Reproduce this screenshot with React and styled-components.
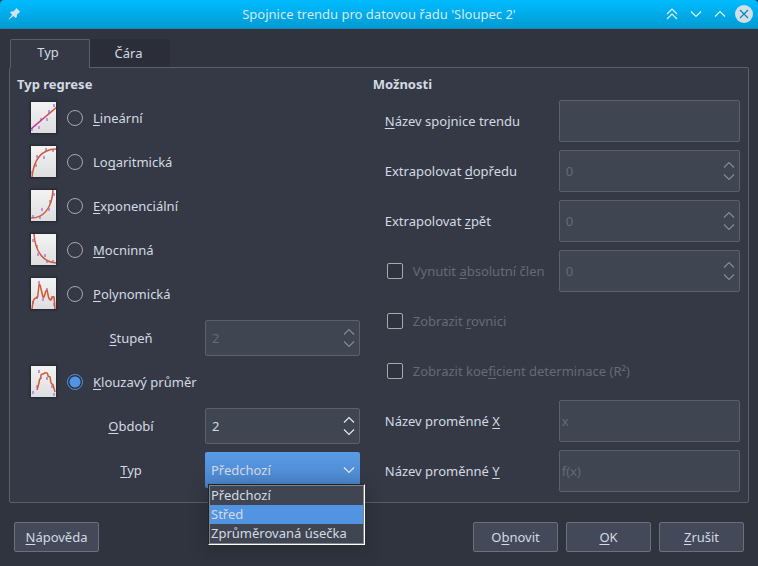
import React, { useState } from "react";
import styled, { createGlobalStyle } from "styled-components";

const GlobalStyle = createGlobalStyle`
  * {
    box-sizing: border-box;
  }

  body {
    margin: 0;
    background: #2f343f;
    color: #d3dae3;
    font-family: "Noto Sans", sans-serif;
    font-size: 13px;
    line-height: 18px;
  }

  button, input, select {
    margin: 0;
    color: inherit;
    font: inherit;
  }
`;

// window frame
const Window = styled.div`
  display: flex;
  flex-direction: column;
  min-height: 100vh;
`;

const TitleBar = styled.header`
  display: grid;
  grid-template-columns: 92px 1fr 92px;
  align-items: center;
  height: 29px;
  padding: 0 4px;
  border-bottom: 1px solid #1787b1;
  border-radius: 4px 4px 0 0;
  background: linear-gradient(#00bcff, #009bd3);
`;

const Title = styled.h1`
  margin: 0;
  color: #d3e9f5;
  font-size: 13px;
  font-weight: 400;
  text-align: center;
  white-space: nowrap;
`;

const WindowButtons = styled.div`
  display: flex;
  justify-content: flex-end;
  gap: 4px;
`;

const WindowButton = styled.button`
  display: flex;
  align-items: center;
  justify-content: center;
  width: 20px;
  height: 20px;
  padding: 0;
  border: 0;
  background: none;
  color: #e0f0f9;
`;

// tabs
const Tabs = styled.div`
  display: flex;
  padding: 10px 10px 0;
`;

const Tab = styled.button`
  position: relative;
  width: 80px;
  height: 28px;
  padding: ${(p) => (p.$active ? "0 4px 3px 0" : "0 3px 1px 0")};
  border: 1px solid ${(p) => (p.$active ? "#5b5f6b" : "#2b2e39")};
  border-bottom: 0;
  border-radius: 2px 2px 0 0;
  background: ${(p) => (p.$active ? "#353945" : "#2b2e39")};

  &::after {
    content: "";
    display: ${(p) => (p.$active ? "block" : "none")};
    position: absolute;
    right: 0;
    bottom: -1px;
    left: 0;
    height: 1px;
    background: #353945;
  }
`;

const Panel = styled.main`
  display: grid;
  grid-template-columns: minmax(0, 14fr) minmax(0, 15fr);
  gap: 13px;
  margin: 0 9px;
  padding: 0 8px 6px 7px;
  border: 1px solid #5b5f6b;
  border-radius: 2px;
  background: #353945;
`;

const Group = styled.section`
  display: flex;
  flex-direction: column;
`;

const GroupTitle = styled.h2`
  height: 28px;
  margin: 0;
  padding-top: 7px;
  font-size: 13px;
  font-weight: 700;
`;

// rows
const RegressionRow = styled.div`
  display: flex;
  align-items: center;
  height: 44px;
  padding-left: 14px;
`;

const SettingRow = styled.div`
  display: grid;
  grid-template-columns: 114px minmax(0, 1fr);
  gap: 17px;
  align-items: center;
  height: 44px;
  padding-left: 57px;

  label {
    text-align: center;
  }
`;

const OptionRow = styled.div`
  display: grid;
  grid-template-columns: ${(p) => (p.$wide ? "1fr" : "174px minmax(0, 1fr)")};
  align-items: center;
  height: 50px;
  padding-left: 12px;
`;

const Thumb = styled.svg`
  width: 25px;
  height: 31px;
  margin: 0 11px 1px 0;
  background: linear-gradient(#f3f3f3, #dedede);
  box-shadow: 0 0 2px 1px #23262e;
`;

const Radio = styled.input`
  appearance: none;
  width: 16px;
  height: 16px;
  margin-right: 10px;
  border: 1px solid #a5a9b1;
  border-radius: 50%;

  &:checked {
    border-color: #5294e2;
    background: radial-gradient(#5294e2 5px, #2c303a 6px);
  }
`;

const CheckLabel = styled.label`
  display: flex;
  align-items: center;
  gap: 10px;
  padding-left: 2px;
  color: #656a75;
  white-space: nowrap;
`;

const Checkbox = styled.input`
  appearance: none;
  width: 16px;
  height: 16px;
  border: 1px solid #a5a9b1;
  border-radius: 2px;
  background: #2f333e;
`;

const Key = styled.u`
  text-decoration-thickness: 1px;
  text-decoration-skip-ink: none;
  text-underline-offset: 2px;
`;

// fields
const TextField = styled.input`
  width: 100%;
  height: 42px;
  padding: 0 2px;
  border: 1px solid #5b606b;
  border-radius: 2px;
  background: #404651;

  &::placeholder {
    color: #656a75;
    opacity: 1;
  }
`;

const SpinBox = styled.div`
  display: flex;
  height: ${(p) => (p.$tall ? 42 : 36)}px;
  border: 1px solid #5b606b;
  border-radius: 2px;
  background: #404651;
  color: ${(p) => (p.$disabled ? "#656a75" : "#d3dae3")};
`;

const SpinInput = styled.input`
  flex: 1;
  min-width: 0;
  padding: 0 6px;
  border: 0;
  background: none;
  appearance: textfield;

  &::-webkit-inner-spin-button {
    display: none;
  }
`;

const SpinButtons = styled.div`
  display: flex;
  flex-direction: column;
  justify-content: center;
  width: 20px;
`;

const SpinButton = styled.button`
  display: flex;
  align-items: center;
  justify-content: center;
  height: 12px;
  padding: 0;
  border: 0;
  background: none;
  color: #e4e9f0;

  &:disabled {
    color: #858a94;
  }
`;

const Combo = styled.div`
  position: relative;
`;

const ComboSelect = styled.select`
  display: block;
  appearance: none;
  width: 100%;
  height: 36px;
  padding: 0 24px 0 6px;
  border: 0;
  border-radius: 2px;
  background: linear-gradient(#5a9ae6, #4a85cb);
`;

const ComboArrow = styled.span`
  position: absolute;
  top: 12px;
  right: 5px;
  display: flex;
  color: #e4e9f0;
  pointer-events: none;
`;

const Menu = styled.div`
  position: absolute;
  z-index: 1;
  top: 32px;
  right: -5px;
  left: 3px;
  border: 1px solid #1f2229;
  border-right-color: #fff;
  border-bottom-color: #fff;
  box-shadow: 0 4px 14px 2px rgba(25, 28, 35, 0.35);
`;

const MenuList = styled.ul`
  margin: 0;
  padding: 0;
  border: 1px solid #80848c;
  background: #404651;
  list-style: none;
`;

const MenuItem = styled.li`
  height: 19px;
  padding-left: 1px;
  background: ${(p) => (p.$active ? "#5294e2" : "none")};
  white-space: nowrap;
`;

// footer
const Footer = styled.footer`
  display: flex;
  gap: 8px;
  padding: 19px 14px 14px;
`;

const Button = styled.button`
  width: 85px;
  height: 30px;
  padding: 0;
  border: 1px solid #6b707c;
  border-radius: 2px;
  background: #434958;

  &:first-child {
    margin-right: auto;
  }
`;

const Chevron = ({ up }) => (
  <svg width="12" height="12" viewBox="0 0 12 12" fill="none" stroke="currentColor" strokeWidth="1.2">
    <path d={up ? "M1 8.5 6 3.5 11 8.5" : "M1 3.5 6 8.5 11 3.5"} />
  </svg>
);

const PinIcon = () => (
  <svg width="14" height="14" viewBox="0 0 14 14" fill="#d3e2ec">
    <path d="M9.5 1 13.2 4.7 12 5.8 10 7.6 9.9 10 8.6 11 6.4 9 2 12.6 1.6 12.2 5.2 7.8 3 5.6 4.2 4.4 6.6 4.3 8.5 2.3z" />
  </svg>
);

const CloseIcon = () => (
  <svg width="18" height="18" viewBox="0 0 18 18">
    <circle cx="9" cy="9" r="9" fill="#d3dfe8" />
    <path d="M5 5 13 13M13 5 5 13" fill="none" stroke="#0a86b8" strokeWidth="1.2" />
  </svg>
);

const regressions = [
  {
    id: "linear",
    label: ["", "L", "ineární"],
    curve: "M0 27 26 5",
    dots: [[23, 3], [18, 9], [16, 17], [10, 17], [8, 25], [1, 27]],
  },
  {
    id: "log",
    label: ["Lo", "g", "aritmická"],
    curve: "M1 31C3 12 12 3 26 3",
    dots: [[15, 3], [22, 4], [6, 10], [13, 11], [5, 19], [1, 26]],
  },
  {
    id: "exp",
    label: ["", "E", "xponenciální"],
    curve: "M0 28C12 28 21 19 22 0",
    dots: [[23, 4], [19, 11], [18, 19], [11, 19], [9, 27], [2, 26]],
  },
  {
    id: "power",
    label: ["", "M", "ocninná"],
    curve: "M3 0C4 18 13 29 26 29",
    dots: [[2, 6], [6, 12], [7, 20], [14, 21], [16, 27], [22, 27]],
  },
  {
    id: "poly",
    label: ["", "P", "olynomická"],
    curve: "M1 31 2 24Q3 20 5 20 7 20 7 16L8 7Q9 5 10 11L12 19Q13 20 14 16 16 8 17 17 18 22 20 22 21 18 23 19L24 31",
    dots: [[8, 4], [16, 11], [12, 21], [2, 24], [6, 19], [21, 19], [23, 26]],
  },
  {
    id: "average",
    label: ["", "K", "louzavý průměr"],
    curve: "M6 24 8 17Q8 13 10 12 9 8 12 8L14 7Q17 6 17 10L19 11 20 17 22 19 24 26",
    dots: [[8, 5], [16, 12], [6, 20], [21, 20], [2, 26], [23, 28]],
  },
];

const Accel = ({ parts }) => (
  <>
    {parts[0]}
    <Key>{parts[1]}</Key>
    {parts[2]}
  </>
);

const Spin = ({ id, value, tall, disabled, label }) => (
  <SpinBox $tall={tall} $disabled={disabled}>
    <SpinInput id={id} type="number" defaultValue={value} disabled={disabled} aria-label={label} />
    <SpinButtons>
      <SpinButton type="button" disabled={disabled} aria-label="+">
        <Chevron up />
      </SpinButton>
      <SpinButton type="button" disabled={disabled} aria-label="-">
        <Chevron />
      </SpinButton>
    </SpinButtons>
  </SpinBox>
);

const Regression = ({ item, checked, onSelect }) => (
  <RegressionRow>
    <Thumb viewBox="0 0 25 31" aria-hidden="true">
      <defs>
        <linearGradient id="trend" gradientUnits="userSpaceOnUse" x1="0" y1="27" x2="26" y2="5">
          <stop offset="0" stopColor="#b929b0" />
          <stop offset="1" stopColor="#d0602c" />
        </linearGradient>
      </defs>
      {item.dots.map(([x, y]) => (
        <rect key={`${x}-${y}`} x={x - 1} y={y - 1} width="2" height="3" fill="#bd92ea" />
      ))}
      <path
        d={item.curve}
        fill="none"
        stroke={item.id === "linear" ? "url(#trend)" : "#cf5a35"}
        strokeWidth="1.5"
      />
    </Thumb>
    <Radio
      type="radio"
      name="regression"
      id={item.id}
      checked={checked}
      onChange={() => onSelect(item.id)}
    />
    <label htmlFor={item.id}>
      <Accel parts={item.label} />
    </label>
  </RegressionRow>
);

const averageTypes = ["Předchozí", "Střed", "Zprůměrovaná úsečka"];

export default function App() {
  const [regression, setRegression] = useState("average");

  return (
    <Window>
      <GlobalStyle />
      <TitleBar>
        <WindowButton type="button" aria-label="Pin">
          <PinIcon />
        </WindowButton>
        <Title>Spojnice trendu pro datovou řadu 'Sloupec 2'</Title>
        <WindowButtons>
          <WindowButton type="button" aria-label="Shade">
            <svg width="12" height="12" viewBox="0 0 12 12" fill="none" stroke="currentColor" strokeWidth="1.2">
              <path d="M1 6 6 1 11 6M1 11 6 6 11 11" />
            </svg>
          </WindowButton>
          <WindowButton type="button" aria-label="Minimize">
            <Chevron />
          </WindowButton>
          <WindowButton type="button" aria-label="Maximize">
            <Chevron up />
          </WindowButton>
          <WindowButton type="button" aria-label="Close">
            <CloseIcon />
          </WindowButton>
        </WindowButtons>
      </TitleBar>

      <Tabs role="tablist">
        <Tab type="button" role="tab" aria-selected="true" $active>
          Typ
        </Tab>
        <Tab type="button" role="tab" aria-selected="false">
          Čára
        </Tab>
      </Tabs>

      <Panel>
        <Group>
          <GroupTitle>Typ regrese</GroupTitle>
          {regressions.slice(0, 5).map((item) => (
            <Regression
              key={item.id}
              item={item}
              checked={regression === item.id}
              onSelect={setRegression}
            />
          ))}
          <SettingRow>
            <label htmlFor="degree">
              <Accel parts={["", "S", "tupeň"]} />
            </label>
            <Spin id="degree" value={2} disabled />
          </SettingRow>
          <Regression
            item={regressions[5]}
            checked={regression === "average"}
            onSelect={setRegression}
          />
          <SettingRow>
            <label htmlFor="period">
              <Accel parts={["", "O", "bdobí"]} />
            </label>
            <Spin id="period" value={2} />
          </SettingRow>
          <SettingRow>
            <label htmlFor="average-type">
              <Accel parts={["", "T", "yp"]} />
            </label>
            <Combo>
              <ComboSelect id="average-type">
                {averageTypes.map((type) => (
                  <option key={type}>{type}</option>
                ))}
              </ComboSelect>
              <ComboArrow>
                <Chevron />
              </ComboArrow>
              <Menu>
                <MenuList role="listbox">
                  {averageTypes.map((type) => (
                    <MenuItem
                      key={type}
                      role="option"
                      aria-selected={type === "Střed"}
                      $active={type === "Střed"}
                    >
                      {type}
                    </MenuItem>
                  ))}
                </MenuList>
              </Menu>
            </Combo>
          </SettingRow>
        </Group>

        <Group>
          <GroupTitle>Možnosti</GroupTitle>
          <OptionRow>
            <label htmlFor="name">
              <Accel parts={["", "N", "ázev spojnice trendu"]} />
            </label>
            <TextField id="name" type="text" />
          </OptionRow>
          <OptionRow>
            <label htmlFor="forward">
              <Accel parts={["Extrapolovat ", "d", "opředu"]} />
            </label>
            <Spin id="forward" value={0} tall disabled />
          </OptionRow>
          <OptionRow>
            <label htmlFor="backward">
              <Accel parts={["Extrapolovat ", "z", "pět"]} />
            </label>
            <Spin id="backward" value={0} tall disabled />
          </OptionRow>
          <OptionRow>
            <CheckLabel>
              <Checkbox type="checkbox" disabled />
              <span>
                <Accel parts={["Vynutit ", "a", "bsolutní člen"]} />
              </span>
            </CheckLabel>
            <Spin id="intercept" value={0} tall disabled label="Vynutit absolutní člen" />
          </OptionRow>
          <OptionRow $wide>
            <CheckLabel>
              <Checkbox type="checkbox" disabled />
              <span>
                <Accel parts={["Zobrazit ", "r", "ovnici"]} />
              </span>
            </CheckLabel>
          </OptionRow>
          <OptionRow $wide>
            <CheckLabel>
              <Checkbox type="checkbox" disabled />
              <span>
                <Accel parts={["Zobrazit koe", "fi", "cient determinace (R²)"]} />
              </span>
            </CheckLabel>
          </OptionRow>
          <OptionRow>
            <label htmlFor="variable-x">
              <Accel parts={["Název proměnné ", "X", ""]} />
            </label>
            <TextField id="variable-x" type="text" placeholder="x" disabled />
          </OptionRow>
          <OptionRow>
            <label htmlFor="variable-y">
              <Accel parts={["Název proměnné ", "Y", ""]} />
            </label>
            <TextField id="variable-y" type="text" placeholder="f(x)" disabled />
          </OptionRow>
        </Group>
      </Panel>

      <Footer>
        <Button type="button">
          <Accel parts={["", "N", "ápověda"]} />
        </Button>
        <Button type="button">
          <Accel parts={["O", "b", "novit"]} />
        </Button>
        <Button type="button">
          <Accel parts={["", "O", "K"]} />
        </Button>
        <Button type="button">
          <Accel parts={["", "Z", "rušit"]} />
        </Button>
      </Footer>
    </Window>
  );
}
